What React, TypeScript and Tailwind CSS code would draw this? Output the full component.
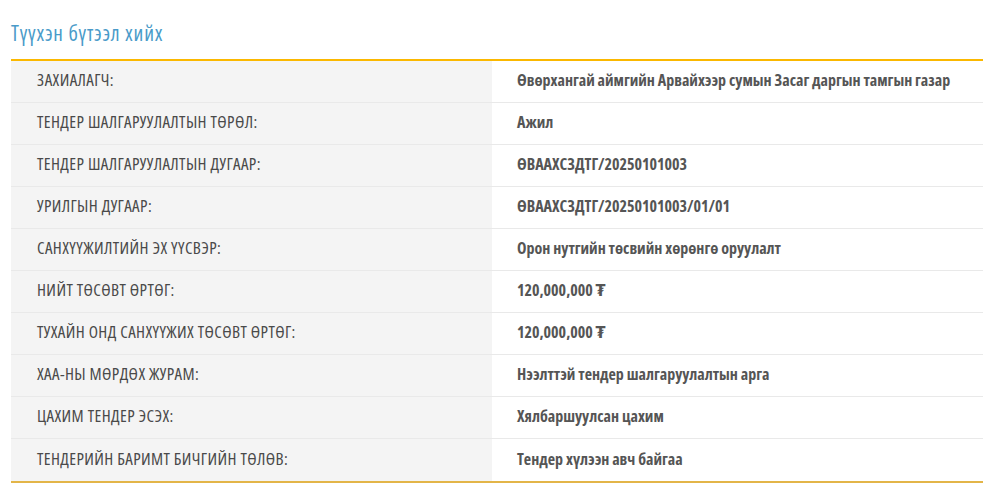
const rows: [string, string][] = [
  ["ЗАХИАЛАГЧ:", "Өвөрхангай аймгийн Арвайхээр сумын Засаг даргын тамгын газар"],
  ["ТЕНДЕР ШАЛГАРУУЛАЛТЫН ТӨРӨЛ:", "Ажил"],
  ["ТЕНДЕР ШАЛГАРУУЛАЛТЫН ДУГААР:", "ӨВААХСЗДТГ/20250101003"],
  ["УРИЛГЫН ДУГААР:", "ӨВААХСЗДТГ/20250101003/01/01"],
  ["САНХҮҮЖИЛТИЙН ЭХ ҮҮСВЭР:", "Орон нутгийн төсвийн хөрөнгө оруулалт"],
  ["НИЙТ ТӨСӨВТ ӨРТӨГ:", "120,000,000 ₮"],
  ["ТУХАЙН ОНД САНХҮҮЖИХ ТӨСӨВТ ӨРТӨГ:", "120,000,000 ₮"],
  ["ХАА-НЫ МӨРДӨХ ЖУРАМ:", "Нээлттэй тендер шалгаруулалтын арга"],
  ["ЦАХИМ ТЕНДЕР ЭСЭХ:", "Хялбаршуулсан цахим"],
  ["ТЕНДЕРИЙН БАРИМТ БИЧГИЙН ТӨЛӨВ:", "Тендер хүлээн авч байгаа"],
];

export default function App() {
  return (
    <div className="min-h-[492px] bg-white pl-[11px] pt-[21px] font-['Open_Sans','DejaVu_Sans_Condensed',sans-serif]">
      <h2 className="mb-[14px] text-[21px] leading-[24px] tracking-[0.8px] font-stretch-[82%] text-[#4a9bc9]">
        Түүхэн бүтээл хийх
      </h2>
      <div className="border-t-2 border-b-2 border-t-[#fbb800] border-b-[#e3b548]">
        {rows.map(([label, value], i) => (
          <div
            key={label}
            className={`grid h-[42px] grid-cols-[481px_1fr] ${
              i < rows.length - 1 ? "border-b border-[#e9e9e9]" : ""
            }`}
          >
            <div className="flex items-center whitespace-nowrap bg-[#f4f4f4] pb-[3px] pl-[26px] text-[17px] tracking-[0.4px] font-stretch-[87%] text-[#4a4a4a]">
              {label}
            </div>
            <div className="flex items-center whitespace-nowrap pb-[3px] pl-[25px] text-[16px] font-bold font-stretch-[75%] text-[#555]">
              {value}
            </div>
          </div>
        ))}
      </div>
    </div>
  );
}
